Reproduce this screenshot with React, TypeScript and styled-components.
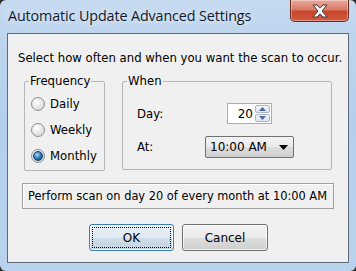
import React from "react";
import styled, { createGlobalStyle } from "styled-components";

const GlobalStyle = createGlobalStyle`
  html, body {
    margin: 0;
    padding: 0;
    background: #2b2b2b;
  }
  * {
    box-sizing: border-box;
  }
`;

const frequencies = ["Daily", "Weekly", "Monthly"];
const selected = "Monthly";

const App = (): JSX.Element => {
  return (
    <>
      <GlobalStyle />
      <Window>
        <TitleBar>
          <Title>Automatic Update Advanced Settings</Title>
          <CloseButton>
            <svg width="20" height="14" viewBox="0 0 20 14">
              <path
                d="M3 1h4l3 3.2L13 1h4l-5 6 5 6h-4l-3-3.2L7 13H3l5-6z"
                fill="#ffffff"
                stroke="#3b3b3b"
                strokeWidth="1"
                strokeLinejoin="round"
              />
            </svg>
          </CloseButton>
        </TitleBar>
        <Client>
          <Intro>Select how often and when you want the scan to occur.</Intro>
          <Groups>
            <FrequencyGroup>
              <Legend>Frequency</Legend>
              <GroupBody $gap={9} $padTop={7} $padLeft={6}>
                {frequencies.map((f) => (
                  <RadioRow key={f}>
                    <RadioCircle $checked={f === selected} />
                    <span>{f}</span>
                  </RadioRow>
                ))}
              </GroupBody>
            </FrequencyGroup>
            <WhenGroup>
              <Legend>When</Legend>
              <GroupBody $gap={12} $padTop={15} $padLeft={14}>
                <FieldRow>
                  <FieldLabel>Day:</FieldLabel>
                  <Spinner>
                    <SpinValue>20</SpinValue>
                    <SpinButtons>
                      <SpinButton>
                        <svg width="7" height="4" viewBox="0 0 7 4">
                          <path d="M0 4L3.5 0L7 4z" fill="#4d6a9c" />
                        </svg>
                      </SpinButton>
                      <SpinButton>
                        <svg width="7" height="4" viewBox="0 0 7 4">
                          <path d="M0 0L3.5 4L7 0z" fill="#4d6a9c" />
                        </svg>
                      </SpinButton>
                    </SpinButtons>
                  </Spinner>
                </FieldRow>
                <FieldRow>
                  <FieldLabel>At:</FieldLabel>
                  <Combo>
                    <span>10:00 AM</span>
                    <svg width="9" height="5" viewBox="0 0 9 5">
                      <path d="M0 0h9L4.5 5z" fill="#000" />
                    </svg>
                  </Combo>
                </FieldRow>
              </GroupBody>
            </WhenGroup>
          </Groups>
          <Summary>Perform scan on day 20 of every month at 10:00 AM</Summary>
          <Buttons>
            <DialogButton $default>
              <FocusRect>OK</FocusRect>
            </DialogButton>
            <DialogButton>Cancel</DialogButton>
          </Buttons>
        </Client>
      </Window>
    </>
  );
};

export default App;

const uiFont = `"DejaVu Sans", Verdana, sans-serif`;

const Window = styled.div`
  width: 356px;
  height: 271px;
  display: flex;
  flex-direction: column;
  border-radius: 6px;
  background: linear-gradient(
    to bottom,
    #c6daf0 0px,
    #bed5ee 33px,
    #b4cfed 120px,
    #b9d3ee 271px
  );
  overflow: hidden;
`;

const TitleBar = styled.div`
  height: 33px;
  flex: none;
  display: flex;
  justify-content: space-between;
  align-items: flex-start;
  padding: 0 7px 0 8px;
`;

const Title = styled.div`
  margin-top: 6px;
  font-family: "Open Sans", sans-serif;
  font-size: 14.3px;
  color: #111a2a;
  letter-spacing: -0.1px;
  text-shadow: 0 0 6px rgba(255, 255, 255, 0.9);
`;

const CloseButton = styled.div`
  width: 59px;
  height: 22px;
  display: flex;
  align-items: center;
  justify-content: center;
  border: 1px solid #6b2b22;
  border-top: none;
  border-radius: 0 0 5px 5px;
  background: linear-gradient(
    to bottom,
    #e9a99b 0%,
    #d97a66 45%,
    #c8452d 55%,
    #d45a3f 100%
  );
  box-shadow: inset 0 0 0 1px rgba(255, 255, 255, 0.35);
`;

const Client = styled.div`
  flex: 1;
  margin: 0 7px 8px 7px;
  border: 1px solid #5f6b78;
  background: #f0f0f0;
  display: flex;
  flex-direction: column;
  padding: 17px 0 0 0;
  font-family: ${uiFont};
  font-size: 11.7px;
  color: #000;
`;

const Intro = styled.div`
  padding-left: 10px;
  line-height: 14px;
  white-space: nowrap;
`;

const Groups = styled.div`
  display: flex;
  align-items: flex-start;
  gap: 17px;
  padding-left: 16px;
  margin-top: 9px;
`;

const GroupBox = styled.fieldset`
  flex: none;
  margin: 0;
  border: 1px solid #b5b5b5;
  border-radius: 2px;
  padding: 0;
  min-width: 0;
`;

const FrequencyGroup = styled(GroupBox)`
  width: 81px;
  height: 97px;
`;

const WhenGroup = styled(GroupBox)`
  width: 210px;
  height: 96px;
`;

const GroupBody = styled.div<{ $gap: number; $padTop: number; $padLeft: number }>`
  display: flex;
  flex-direction: column;
  gap: ${(p) => p.$gap}px;
  padding: ${(p) => p.$padTop}px 0 0 ${(p) => p.$padLeft}px;
`;

const Legend = styled.legend`
  padding: 0 1px;
  margin-left: 4px;
  line-height: 14px;
`;

const RadioRow = styled.label`
  display: flex;
  align-items: center;
  gap: 5px;
  height: 17px;
`;

const RadioCircle = styled.span<{ $checked?: boolean }>`
  width: 14px;
  height: 14px;
  border-radius: 50%;
  border: 1px solid #8e8f8f;
  background: radial-gradient(circle at 40% 35%, #ffffff 0%, #e4e4e4 55%, #c9c9c9 100%);
  display: flex;
  align-items: center;
  justify-content: center;

  &::after {
    content: "";
    display: ${(p) => (p.$checked ? "block" : "none")};
    width: 8px;
    height: 8px;
    border-radius: 50%;
    background: radial-gradient(circle at 40% 35%, #a9dcf6 0%, #2a78b8 50%, #0d3f74 100%);
    border: 1px solid #16406b;
  }
`;

const FieldRow = styled.div`
  display: flex;
  align-items: center;
`;

const FieldLabel = styled.span`
  width: 68px;
`;

const Spinner = styled.div`
  margin-left: 22px;
  width: 45px;
  height: 21px;
  border: 1px solid #abadb3;
  background: #fff;
  display: flex;
  align-items: center;
  padding: 1px;
`;

const SpinValue = styled.span`
  flex: 1;
  text-align: right;
  padding-right: 2px;
  font-size: 12px;
`;

const SpinButtons = styled.div`
  display: flex;
  flex-direction: column;
  gap: 1px;
  width: 15px;
  height: 17px;
`;

const SpinButton = styled.div`
  flex: 1;
  display: flex;
  align-items: center;
  justify-content: center;
  border: 1px solid #a9b6c9;
  border-radius: 2px;
  background: linear-gradient(to bottom, #f5f8fc, #d9e3ef);
`;

const Combo = styled.div`
  width: 89px;
  height: 22px;
  border: 1px solid #707070;
  border-radius: 2px;
  background: linear-gradient(to bottom, #f2f2f2 0%, #ebebeb 50%, #dddddd 51%, #cfcfcf 100%);
  display: flex;
  align-items: center;
  justify-content: space-between;
  padding: 0 5px 0 4px;
  font-size: 12px;
`;

const Summary = styled.div`
  margin: 12px 14px 0 14px;
  height: 26px;
  flex: none;
  border: 1px solid #a0a0a0;
  box-shadow: inset 1px 1px 0 #ffffff;
  display: flex;
  align-items: center;
  padding-left: 5px;
  white-space: nowrap;
  overflow: hidden;
  font-size: 11.4px;
`;

const Buttons = styled.div`
  display: flex;
  justify-content: center;
  gap: 8px;
  margin-top: 15px;
  padding-left: 1px;
`;

const DialogButton = styled.div<{ $default?: boolean }>`
  width: ${(p) => (p.$default ? "85px" : "86px")};
  height: 27px;
  border: 1px solid ${(p) => (p.$default ? "#3c7fb1" : "#707070")};
  border-radius: 3px;
  background: ${(p) =>
    p.$default
      ? "linear-gradient(to bottom, #eaf1f6 0%, #e0eaf2 50%, #cfdde8 51%, #c4d5e2 100%)"
      : "linear-gradient(to bottom, #f2f2f2 0%, #ebebeb 50%, #dddddd 51%, #cfcfcf 100%)"};
  box-shadow: inset 0 0 0 1px rgba(255, 255, 255, 0.7);
  display: flex;
  align-items: center;
  justify-content: center;
  padding: 2px;
  font-size: 12px;
`;

const FocusRect = styled.span`
  width: 100%;
  height: 100%;
  border: 1px dotted #000;
  display: flex;
  align-items: center;
  justify-content: center;
`;
